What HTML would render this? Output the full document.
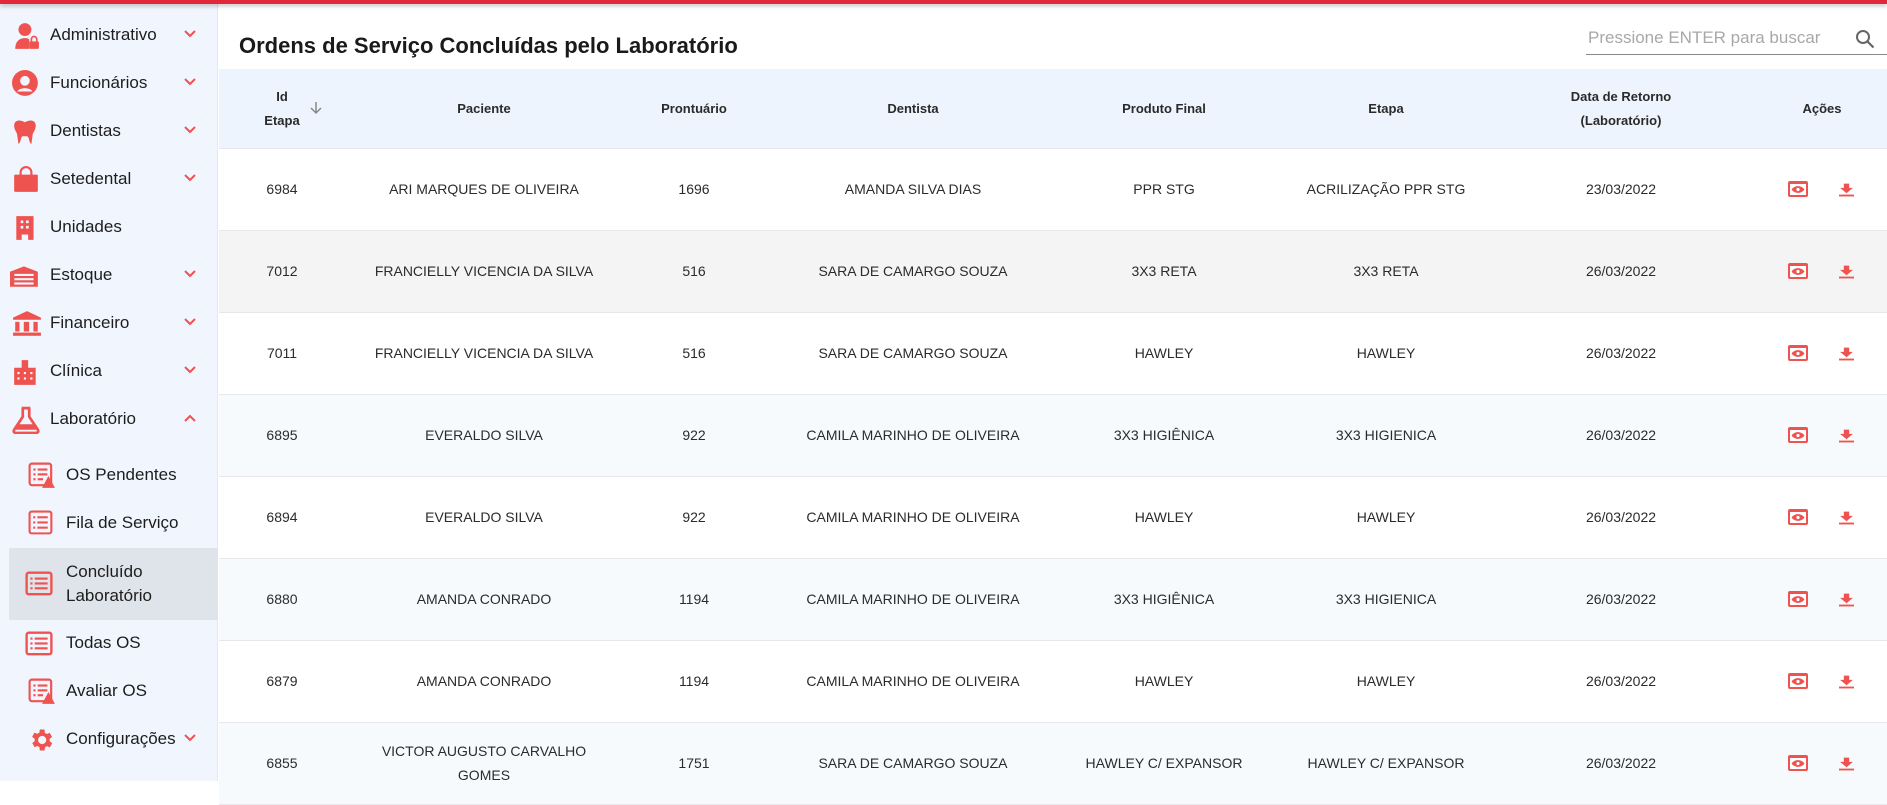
<!DOCTYPE html>
<html><head><meta charset="utf-8"><style>
*{margin:0;padding:0;box-sizing:border-box}
body{width:1887px;height:781px;overflow:hidden;background:#fff;font-family:"Liberation Sans",Arial,sans-serif;position:relative;color:#222}
.top{position:absolute;left:0;top:0;width:1887px;height:4px;background:#e3273a;box-shadow:0 2px 4px rgba(0,0,0,.25);z-index:5}
.side{position:absolute;left:0;top:0;width:218px;height:781px;background:#f0f5fe;border-right:1px solid #e3e7ee}
.it{position:absolute;left:0;width:218px;height:30px;display:flex;align-items:center;font-size:17px;color:#1d1d1d}
.it svg.ic{position:absolute;left:12px;top:2px}
.it .t{position:absolute;left:50px}
.it .sub{position:absolute;left:66px}
.chev{position:absolute;left:183px;top:9px}
.sel{position:absolute;left:9px;top:548px;width:209px;height:72px;background:#dfe3ea}
.title{position:absolute;left:239px;top:33px;font-size:22px;font-weight:bold;color:#1a1a1a}
.search{position:absolute;left:1586px;top:24px;width:301px;height:31px;border-bottom:1.5px solid #8a8a8a;font-size:17px;color:#a8a8a8;padding-left:2px;line-height:28px}
.thead{position:absolute;left:219px;top:69px;width:1668px;height:80px;background:#eef4fe;border-bottom:1.5px solid #e3e6ea}
.h{position:absolute;font-size:13px;font-weight:bold;color:#2a2a2a;text-align:center;line-height:24px;transform:translateX(-50%);white-space:nowrap}
.row{position:absolute;left:219px;width:1668px;height:82px;border-bottom:1.5px solid #e6e8eb}
.c{position:absolute;top:0;height:80px;display:flex;align-items:center;justify-content:center;text-align:center;font-size:14px;color:#2b2b2b;transform:translateX(-50%);line-height:24px}
</style></head><body>
<div class="top"></div>
<div class="side">
<div class="sel"></div>
<div class="it" style="top:20px"><svg class="ic" width="28" height="28" viewBox="0 0 26 26"><circle cx="12" cy="7" r="6" fill="#ef5350"/><path d="M3 25c0-7 4-10 9-10 2 0 3 .3 4 1v9z" fill="#ef5350"/><rect x="16" y="18" width="9" height="7" rx="1" fill="#ef5350"/><path d="M18 18v-2a2.5 2.5 0 015 0v2" stroke="#ef5350" stroke-width="1.6" fill="none"/></svg><span class="t">Administrativo</span><svg class="chev" width="14" height="10"><path d="M2 2l5 5 5-5" stroke="#ef5350" stroke-width="2" fill="none"/></svg></div>
<div class="it" style="top:68px"><svg class="ic" width="28" height="28" viewBox="0 0 26 26"><circle cx="12" cy="12" r="12" fill="#ef5350"/><circle cx="12" cy="10" r="4.5" fill="#f0f5fe"/><path d="M5 20c2-4 12-4 14 0" fill="#f0f5fe"/></svg><span class="t">Funcionários</span><svg class="chev" width="14" height="10"><path d="M2 2l5 5 5-5" stroke="#ef5350" stroke-width="2" fill="none"/></svg></div>
<div class="it" style="top:116px"><svg class="ic" width="28" height="28" viewBox="0 0 26 26"><path d="M2 7c0-5 5-6 10-3 5-3 10-2 10 3 0 5-3 6-3 10l-1 7c-2 0-2-7-4-7h-4c-2 0-2 7-4 7L5 17c0-4-3-5-3-10z" fill="#ef5350"/></svg><span class="t">Dentistas</span><svg class="chev" width="14" height="10"><path d="M2 2l5 5 5-5" stroke="#ef5350" stroke-width="2" fill="none"/></svg></div>
<div class="it" style="top:164px"><svg class="ic" width="28" height="28" viewBox="0 0 26 26"><rect x="2" y="8" width="22" height="16" rx="1" fill="#ef5350"/><path d="M8 10V6a5 5 0 0110 0v4" stroke="#ef5350" stroke-width="2" fill="none"/></svg><span class="t">Setedental</span><svg class="chev" width="14" height="10"><path d="M2 2l5 5 5-5" stroke="#ef5350" stroke-width="2" fill="none"/></svg></div>
<div class="it" style="top:212px"><svg class="ic" width="28" height="28" viewBox="0 0 26 26"><path d="M4 2h16v22h-5v-5h-6v5H4z" fill="#ef5350"/><rect x="8" y="6" width="2.5" height="2.5" fill="#f0f5fe"/><rect x="13" y="6" width="2.5" height="2.5" fill="#f0f5fe"/><rect x="8" y="11" width="2.5" height="2.5" fill="#f0f5fe"/><rect x="13" y="11" width="2.5" height="2.5" fill="#f0f5fe"/></svg><span class="t">Unidades</span></div>
<div class="it" style="top:260px"><svg class="ic" style="left:10px" width="30" height="28" viewBox="0 0 28 26"><path d="M0 9l13-5 13 5v14H0z" fill="#ef5350"/><rect x="4" y="11" width="18" height="2" fill="#f0f5fe"/><rect x="4" y="15" width="18" height="2" fill="#f0f5fe"/><rect x="4" y="19" width="18" height="2" fill="#f0f5fe"/></svg><span class="t">Estoque</span><svg class="chev" width="14" height="10"><path d="M2 2l5 5 5-5" stroke="#ef5350" stroke-width="2" fill="none"/></svg></div>
<div class="it" style="top:308px"><svg class="ic" width="30" height="28" viewBox="0 0 28 26"><path d="M1 7l13-6 13 6v2H1z" fill="#ef5350"/><rect x="3" y="11" width="4" height="9" fill="#ef5350"/><rect x="11" y="11" width="5" height="9" fill="#ef5350"/><rect x="20" y="11" width="4" height="9" fill="#ef5350"/><rect x="1" y="21" width="26" height="3" fill="#ef5350"/></svg><span class="t">Financeiro</span><svg class="chev" width="14" height="10"><path d="M2 2l5 5 5-5" stroke="#ef5350" stroke-width="2" fill="none"/></svg></div>
<div class="it" style="top:356px"><svg class="ic" width="28" height="28" viewBox="0 0 26 26"><path d="M2 9h7V2h6v7h7v16H2z" fill="#ef5350"/><g fill="#f0f5fe"><rect x="5" y="13" width="2" height="2"/><rect x="11" y="13" width="2" height="2"/><rect x="17" y="13" width="2" height="2"/><rect x="5" y="18" width="2" height="2"/><rect x="11" y="18" width="2" height="2"/><rect x="17" y="18" width="2" height="2"/></g></svg><span class="t">Clínica</span><svg class="chev" width="14" height="10"><path d="M2 2l5 5 5-5" stroke="#ef5350" stroke-width="2" fill="none"/></svg></div>
<div class="it" style="top:404px"><svg class="ic" width="28" height="28" viewBox="0 0 26 26"><path d="M9 2h8M10 2v8L2 22c-1 2 0 3 2 3h18c2 0 3-1 2-3L16 10V2" stroke="#ef5350" stroke-width="2.5" fill="none"/><path d="M6 17h14l3 5H3z" fill="#ef5350"/></svg><span class="t">Laboratório</span><svg class="chev" width="14" height="10"><path d="M2 8l5-5 5 5" stroke="#ef5350" stroke-width="2" fill="none"/></svg></div>
<div class="it" style="top:460px"><svg class="ic" style="left:28px" width="28" height="28" viewBox="0 0 26 26"><rect x="1.5" y="1.5" width="20" height="20" rx="2" stroke="#ef5350" stroke-width="2" fill="none"/><g fill="#ef5350"><rect x="5" y="6" width="2" height="2"/><rect x="9" y="6" width="9" height="2"/><rect x="5" y="10.5" width="2" height="2"/><rect x="9" y="10.5" width="9" height="2"/><rect x="5" y="15" width="2" height="2"/><rect x="9" y="15" width="5" height="2"/></g><path d="M19 13l6 11H13z" fill="#ef5350"/></svg><span class="sub">OS Pendentes</span></div>
<div class="it" style="top:508px"><svg class="ic" style="left:28px" width="27" height="27" viewBox="0 0 26 26"><rect x="1.5" y="1.5" width="21" height="21" rx="2" stroke="#ef5350" stroke-width="2" fill="none"/><g fill="#ef5350"><rect x="5" y="6" width="2" height="2"/><rect x="9" y="6" width="10" height="2"/><rect x="5" y="11" width="2" height="2"/><rect x="9" y="11" width="10" height="2"/><rect x="5" y="16" width="2" height="2"/><rect x="9" y="16" width="10" height="2"/></g></svg><span class="sub">Fila de Serviço</span></div>
<div class="it" style="top:558px;height:52px"><svg class="ic" style="left:25px;top:12px" width="28" height="28" viewBox="0 0 26 26"><rect x="1.5" y="2.5" width="23" height="20" rx="2" stroke="#ef5350" stroke-width="2.2" fill="none"/><g fill="#ef5350"><rect x="5" y="7" width="2" height="2"/><rect x="9" y="7" width="12" height="2"/><rect x="5" y="11.5" width="2" height="2"/><rect x="9" y="11.5" width="12" height="2"/><rect x="5" y="16" width="2" height="2"/><rect x="9" y="16" width="12" height="2"/></g></svg><span class="sub" style="line-height:24px">Concluído<br>Laboratório</span></div>
<div class="it" style="top:628px"><svg class="ic" style="left:25px" width="28" height="28" viewBox="0 0 26 26"><rect x="1.5" y="2.5" width="23" height="20" rx="2" stroke="#ef5350" stroke-width="2.2" fill="none"/><g fill="#ef5350"><rect x="5" y="7" width="2" height="2"/><rect x="9" y="7" width="12" height="2"/><rect x="5" y="11.5" width="2" height="2"/><rect x="9" y="11.5" width="12" height="2"/><rect x="5" y="16" width="2" height="2"/><rect x="9" y="16" width="12" height="2"/></g></svg><span class="sub">Todas OS</span></div>
<div class="it" style="top:676px"><svg class="ic" style="left:28px" width="28" height="28" viewBox="0 0 26 26"><rect x="1.5" y="1.5" width="20" height="20" rx="2" stroke="#ef5350" stroke-width="2" fill="none"/><g fill="#ef5350"><rect x="5" y="6" width="2" height="2"/><rect x="9" y="6" width="9" height="2"/><rect x="5" y="10.5" width="2" height="2"/><rect x="9" y="10.5" width="9" height="2"/><rect x="5" y="15" width="2" height="2"/><rect x="9" y="15" width="5" height="2"/></g><path d="M19 13l6 11H13z" fill="#ef5350"/></svg><span class="sub">Avaliar OS</span></div>
<div class="it" style="top:724px"><svg class="ic" style="left:27px" width="28" height="28" viewBox="0 0 24 24"><path fill="#ef5350" d="M19.4 13a7.5 7.5 0 000-2l2.1-1.6-2-3.5-2.5 1a7 7 0 00-1.7-1L15 3h-4l-.4 2.7a7 7 0 00-1.7 1l-2.5-1-2 3.5L6.6 11a7.5 7.5 0 000 2l-2.1 1.6 2 3.5 2.5-1a7 7 0 001.7 1L11 21h4l.4-2.7a7 7 0 001.7-1l2.5 1 2-3.5zM13 15.5a3.5 3.5 0 110-7 3.5 3.5 0 010 7z"/></svg><span class="sub">Configurações</span><svg class="chev" width="14" height="10"><path d="M2 2l5 5 5-5" stroke="#ef5350" stroke-width="2" fill="none"/></svg></div>
</div>

<div class="title">Ordens de Serviço Concluídas pelo Laboratório</div>
<div class="search">Pressione ENTER para buscar<svg style="position:absolute;right:12px;top:5px" width="20" height="20" viewBox="0 0 20 20"><circle cx="8" cy="8" r="6" stroke="#666" stroke-width="2" fill="none"/><path d="M12.5 12.5l6 6" stroke="#666" stroke-width="2.2"/></svg></div>

<div class="thead">
<div class="h" style="left:63px;top:16px">Id<br>Etapa</div>
<svg style="position:absolute;left:90px;top:32px" width="14" height="14" viewBox="0 0 14 14"><path d="M7 1v11M2 7l5 5 5-5" stroke="#888" stroke-width="1.5" fill="none"/></svg>
<div class="h" style="left:265px;top:28px">Paciente</div>
<div class="h" style="left:475px;top:28px">Prontuário</div>
<div class="h" style="left:694px;top:28px">Dentista</div>
<div class="h" style="left:945px;top:28px">Produto Final</div>
<div class="h" style="left:1167px;top:28px">Etapa</div>
<div class="h" style="left:1402px;top:16px">Data de Retorno<br>(Laboratório)</div>
<div class="h" style="left:1603px;top:28px">Ações</div>
</div>

<div id="rows"></div>
<script>
var d=[["6984","ARI MARQUES DE OLIVEIRA","1696","AMANDA SILVA DIAS","PPR STG","ACRILIZAÇÃO PPR STG","23/03/2022","#fff"],
["7012","FRANCIELLY VICENCIA DA SILVA","516","SARA DE CAMARGO SOUZA","3X3 RETA","3X3 RETA","26/03/2022","#f4f4f4"],
["7011","FRANCIELLY VICENCIA DA SILVA","516","SARA DE CAMARGO SOUZA","HAWLEY","HAWLEY","26/03/2022","#fff"],
["6895","EVERALDO SILVA","922","CAMILA MARINHO DE OLIVEIRA","3X3 HIGIÊNICA","3X3 HIGIENICA","26/03/2022","#f7fafd"],
["6894","EVERALDO SILVA","922","CAMILA MARINHO DE OLIVEIRA","HAWLEY","HAWLEY","26/03/2022","#fff"],
["6880","AMANDA CONRADO","1194","CAMILA MARINHO DE OLIVEIRA","3X3 HIGIÊNICA","3X3 HIGIENICA","26/03/2022","#f7fafd"],
["6879","AMANDA CONRADO","1194","CAMILA MARINHO DE OLIVEIRA","HAWLEY","HAWLEY","26/03/2022","#fff"],
["6855","VICTOR AUGUSTO CARVALHO<br>GOMES","1751","SARA DE CAMARGO SOUZA","HAWLEY C/ EXPANSOR","HAWLEY C/ EXPANSOR","26/03/2022","#f7fafd"]];
var cx=[63,265,475,694,945,1167,1402],w=[100,240,120,260,200,220,160],h="";
d.forEach(function(r,i){h+='<div class="row" style="top:'+(149+82*i)+'px;background:'+r[7]+'">';
for(var j=0;j<7;j++)h+='<div class="c" style="left:'+cx[j]+'px;width:'+w[j]+'px">'+r[j]+'</div>';
h+='<svg style="position:absolute;left:1569px;top:32px" width="20" height="16" viewBox="0 0 20 16"><rect x="0" y="0" width="20" height="16" rx="2" fill="#ef5350"/><rect x="2" y="3" width="16" height="11" fill="#fff"/><path d="M3.5 8.5c3-4.5 10-4.5 13 0-3 4.5-10 4.5-13 0z" fill="#ef5350"/><circle cx="10" cy="8.5" r="1.6" fill="#fff"/></svg>';
h+='<svg style="position:absolute;left:1620px;top:34px" width="15" height="14" viewBox="0 0 14 12"><path d="M4.5 0h5v4h3.5L7 9 1 4h3.5z" fill="#ef5350"/><rect x="0" y="10.3" width="14" height="1.7" fill="#ef5350"/></svg></div>';});
document.getElementById("rows").innerHTML=h;
</script>
</body></html>
